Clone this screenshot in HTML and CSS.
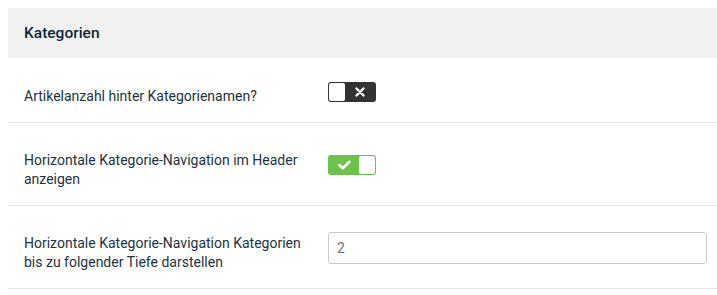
FILE: index.html
```html
<!DOCTYPE html>
<html lang="de">
<head>
<meta charset="utf-8">
<link rel="stylesheet" href="styles.css">
</head>
<body>
<div class="panel">
  <div class="panel-head">Kategorien</div>
  <div class="row">
    <div class="label">Artikelanzahl hinter Kategorienamen?</div>
    <div class="control">
      <span class="toggle off">
        <span class="knob"></span>
        <span class="icon">
          <svg width="10" height="10" viewBox="0 0 10 10"><path d="M1.5 1.5 L8.5 8.5 M8.5 1.5 L1.5 8.5" stroke="#fff" stroke-width="2.4" stroke-linecap="round"/></svg>
        </span>
      </span>
    </div>
  </div>
  <div class="row">
    <div class="label">Horizontale Kategorie-Navigation im Header anzeigen</div>
    <div class="control">
      <span class="toggle on">
        <span class="icon">
          <svg width="13" height="10" viewBox="0 0 13 10"><path d="M1.5 5.2 L4.8 8.2 L11.5 1.8" fill="none" stroke="#fff" stroke-width="2.6" stroke-linecap="round" stroke-linejoin="round"/></svg>
        </span>
        <span class="knob"></span>
      </span>
    </div>
  </div>
  <div class="row">
    <div class="label">Horizontale Kategorie-Navigation Kategorien bis zu folgender Tiefe darstellen</div>
    <div class="control">
      <input class="text-input" type="text" value="2">
    </div>
  </div>
</div>
</body>
</html>
```
FILE: styles.css
```css
html, body {
  margin: 0;
  padding: 0;
  background: #fff;
}
body {
  padding: 8px 0 0 8px;
  font-family: Roboto, "Liberation Sans", sans-serif;
}
.panel {
  display: flex;
  flex-direction: column;
}
.panel-head {
  height: 50px;
  box-sizing: border-box;
  background: #f2f2f2;
  padding: 0 16px;
  display: flex;
  align-items: center;
  font-size: 15.5px;
  font-weight: 500;
  color: #0d2738;
}
.row {
  display: flex;
  align-items: center;
  padding: 18px 10px 16px 16px;
  border-bottom: 1px solid #e6e6e6;
}
.panel-head + .row {
  padding-top: 19px;
}
.label {
  width: 288px;
  margin-right: 16px;
  padding-top: 10px;
  font-size: 14px;
  line-height: 19px;
  color: #1b3343;
}
.control {
  flex: 1;
  display: flex;
  align-items: center;
}
.toggle {
  width: 48px;
  height: 20px;
  box-sizing: border-box;
  border-radius: 3px;
  padding: 1px;
  display: flex;
  align-items: stretch;
}
.toggle.off { background: #333; }
.toggle.on { background: #6cc24a; }
.toggle .knob {
  width: 16px;
  background: #fff;
  border-radius: 2px;
}
.toggle .icon {
  flex: 1;
  display: flex;
  align-items: center;
  justify-content: center;
}
.text-input {
  flex: 1;
  height: 32px;
  box-sizing: border-box;
  border: 1px solid #cccccc;
  border-radius: 3px;
  padding: 0 8px;
  font-family: Roboto, "Liberation Sans", sans-serif;
  font-size: 14px;
  color: #777;
  outline: none;
}
```
